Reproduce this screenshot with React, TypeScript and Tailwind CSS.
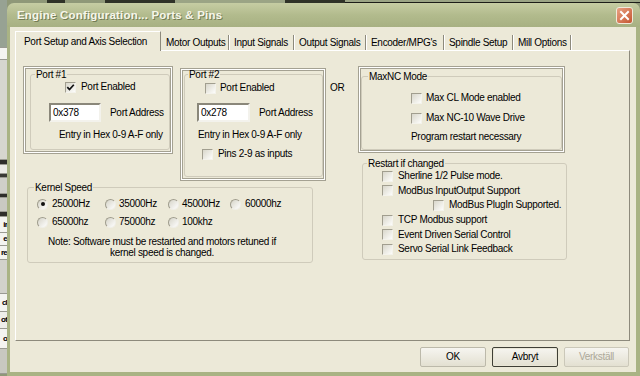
import React from "react";

function Check({ checked = false }: { checked?: boolean }) {
  return (
    <span className="flex h-[11px] w-[11px] shrink-0 items-center justify-center border border-t-[#a19e8f] border-l-[#a19e8f] border-r-[#f4f3ec] border-b-[#f4f3ec] bg-linear-to-br from-[#d9d7cb] to-[#fdfdfb]">
      {checked && (
        <svg width="9" height="9" viewBox="0 0 9 9">
          <path d="M1.3 4.2 L3.5 6.5 L7.8 1.8" fill="none" stroke="#111" strokeWidth="1.7" />
        </svg>
      )}
    </span>
  );
}

function Radio({ on = false }: { on?: boolean }) {
  return (
    <span className="flex h-[11px] w-[11px] shrink-0 items-center justify-center rounded-full border border-t-[#9f9c8d] border-l-[#9f9c8d] border-r-[#f0efe8] border-b-[#f0efe8] bg-linear-to-br from-[#d6d4c8] to-white">
      {on && <span className="h-[4px] w-[4px] rounded-full bg-[#111]" />}
    </span>
  );
}

function HexBox({ value, w }: { value: string; w: string }) {
  return (
    <div className={`flex h-[19px] items-center border-2 border-t-[#8a877a] border-l-[#8a877a] border-r-[#f3f2ec] border-b-[#f3f2ec] bg-white pl-[2px] ${w}`}>
      {value}
    </div>
  );
}

function Tab({ label, w }: { label: string; w: string }) {
  return (
    <div className={`flex h-[15px] items-center border-r border-[#8d8a7c] pl-[5px] shadow-[1px_0_0_#fff] ${w}`}>
      {label}
    </div>
  );
}

function Btn({ label, kind }: { label: string; kind?: "default" | "off" }) {
  const look =
    kind === "default"
      ? "border-[#3f3f36] shadow-[inset_0_0_0_1px_#e9e6d6]"
      : kind === "off"
      ? "border-[#cbc8b9] text-[#aca899]"
      : "border-[#bcb9aa]";
  return (
    <div className={`flex h-[20px] items-center justify-center rounded-[2px] border bg-linear-to-b from-[#f6f5f0] to-[#e3e0d1] ${look}`}>
      {label}
    </div>
  );
}

const sideBlocks: { h: string; bg: string; t?: string }[] = [
  { h: "h-[48px]", bg: "bg-[#97a293]" },
  { h: "h-[12px]", bg: "bg-[#f5f5f1]" },
  { h: "h-[100px]", bg: "bg-[#d6d6cf]" },
  { h: "h-[5px]", bg: "bg-[#2e2e2a]" },
  { h: "h-[9px]", bg: "bg-[#ececE6]" },
  { h: "h-[4px]", bg: "bg-[#3a3a35]" },
  { h: "h-[16px]", bg: "bg-[#cfcfc8]" },
  { h: "h-[4px]", bg: "bg-[#2e2e2a]" },
  { h: "h-[14px]", bg: "bg-[#c9c9c2]" },
  { h: "h-[5px]", bg: "bg-[#2e2e2a]" },
  { h: "h-[16px]", bg: "bg-[#f4f4f0]", t: "ir" },
  { h: "h-[13px]", bg: "bg-[#f4f4f0]", t: "e" },
  { h: "h-[14px]", bg: "bg-[#f4f4f0]", t: "re" },
  { h: "h-[34px]", bg: "bg-[#d2d2cb]" },
  { h: "h-[18px]", bg: "bg-[#f4f4f0]", t: "cl" },
  { h: "h-[17px]", bg: "bg-[#eeeee9]", t: "ot" },
  { h: "h-[20px]", bg: "bg-[#f4f4f0]", t: "o" },
  { h: "h-[25px]", bg: "bg-[#c8c8c0]" },
];

export default function App() {
  return (
    <div className="flex h-[376px] w-[640px] overflow-hidden bg-[#8f9878] text-[10px] leading-[12px] tracking-[-0.3px] text-black [font-family:'Liberation_Sans',Arial,sans-serif]">
      {/* window behind the dialog */}
      <div className="flex w-[7px] shrink-0 flex-col">
        {sideBlocks.map((b, i) => (
          <div key={i} className={`flex shrink-0 items-center justify-end border-b border-[#9a9a92] ${b.h} ${b.bg}`}>
            {b.t && <span className="text-[8px] font-bold leading-none tracking-[-0.8px] whitespace-nowrap">{b.t}</span>}
          </div>
        ))}
      </div>

      <div className="flex w-[633px] shrink-0 flex-col">
        <div className="flex h-[3px] shrink-0">
          <div className="w-[40px] bg-[#8f9878]" />
          <div className="w-[18px] bg-[#2f3227]" />
          <div className="w-[40px] bg-[#8f9878]" />
          <div className="w-[70px] bg-[#2f3227]" />
          <div className="w-[110px] bg-[#9ba485]" />
          <div className="w-[60px] bg-[#2f3227]" />
          <div className="flex-1 border-b border-[#1c1c18] bg-[#9ba485]" />
        </div>

        {/* title bar */}
        <div className="flex h-[24px] shrink-0 items-center justify-between rounded-t-[7px] bg-linear-to-b from-[#c6cda3] via-[#b2bb8d] to-[#a7b082] pl-[10px] pr-[7px]">
          <span className="text-[11.5px] font-bold tracking-[0.2px] text-[#f6f6ea] [text-shadow:1px_1px_0_#737d55]">
            Engine Configuration... Ports &amp; Pins
          </span>
          <div className="flex h-[17px] w-[17px] items-center justify-center rounded-[3px] border border-[#f1eadb] bg-linear-to-br from-[#e9a283] to-[#c4532f]">
            <svg width="11" height="11" viewBox="0 0 11 11">
              <path d="M2 2 L9 9 M9 2 L2 9" stroke="#fff" strokeWidth="2" strokeLinecap="square" />
            </svg>
          </div>
        </div>

        {/* dialog body */}
        <div className="flex flex-1 flex-col border-b-[4px] border-l-[3px] border-r-[4px] border-[#a9b384] bg-[#ece9d8] pt-[4px]">
          <div className="ml-[5px] flex h-[19px] items-end">
            <div className="relative z-10 -mb-[1px] flex h-[20px] w-[146px] items-center border border-b-0 border-t-white border-l-white border-r-[#8d8a7c] bg-[#ece9d8] pl-[8px]">
              Port Setup and Axis Selection
            </div>
            <Tab label="Motor Outputs" w="w-[68px]" />
            <Tab label="Input Signals" w="w-[65px]" />
            <Tab label="Output Signals" w="w-[72px]" />
            <Tab label="Encoder/MPG's" w="w-[78px]" />
            <Tab label="Spindle Setup" w="w-[69px]" />
            <Tab label="Mill Options" w="w-[58px]" />
          </div>

          <div className="ml-[5px] flex h-[291px] w-[615px] items-start border border-t-white border-l-white border-r-[#8d8a7c] border-b-[#8d8a7c] pl-[7px] pt-[15px]">
            {/* left column: ports + kernel */}
            <div className="flex w-[303px] flex-col">
              <div className="flex items-start gap-[7px]">
                <div className="h-[88px] w-[150px] border border-[#a4a192] pb-[3px] pl-[6px] pr-[2px] pt-[2px] shadow-[inset_0_0_0_1px_#fff,inset_0_0_0_2px_#a4a192]">
                  <fieldset className="h-full rounded-[3px] border border-[#cfcbbb]">
                    <legend className="ml-[4px] px-[1px] leading-[11px]">Port #1</legend>
                    <div className="ml-[34px] flex h-[14px] items-center gap-[5px]">
                      <Check checked />
                      <span>Port Enabled</span>
                    </div>
                    <div className="ml-[18px] mt-[9px] flex items-center">
                      <HexBox value="0x378" w="w-[52px]" />
                      <span className="ml-[9px]">Port Address</span>
                    </div>
                    <div className="ml-[28px] mt-[7px]">Entry in Hex 0-9 A-F only</div>
                  </fieldset>
                </div>

                <div className="mt-[2px] h-[113px] w-[146px] border border-[#a4a192] pb-[3px] pl-[3px] pr-[2px] shadow-[inset_0_0_0_1px_#fff,inset_0_0_0_2px_#a4a192]">
                  <fieldset className="h-full rounded-[3px] border border-[#cfcbbb]">
                    <legend className="ml-[3px] px-[1px] leading-[11px]">Port #2</legend>
                    <div className="ml-[20px] mt-[1px] flex h-[14px] items-center gap-[4px]">
                      <Check />
                      <span>Port Enabled</span>
                    </div>
                    <div className="ml-[12px] mt-[8px] flex items-center">
                      <HexBox value="0x278" w="w-[53px]" />
                      <span className="ml-[9px]">Port Address</span>
                    </div>
                    <div className="ml-[13px] mt-[7px]">Entry in Hex 0-9 A-F only</div>
                    <div className="ml-[17px] mt-[6px] flex h-[14px] items-center gap-[5px]">
                      <Check />
                      <span>Pins 2-9 as inputs</span>
                    </div>
                  </fieldset>
                </div>
              </div>

              <fieldset className="ml-[4px] mt-[1px] h-[81px] w-[286px] rounded-[3px] border border-[#cfcbbb]">
                <legend className="ml-[6px] px-[1px] leading-[11px]">Kernel Speed</legend>
                <div className="ml-[9px] mt-[4px] flex h-[14px] items-center">
                  <div className="flex w-[68px] items-center gap-[4px]"><Radio on /><span>25000Hz</span></div>
                  <div className="flex w-[63px] items-center gap-[3px]"><Radio /><span>35000Hz</span></div>
                  <div className="flex w-[62px] items-center gap-[3px]"><Radio /><span>45000Hz</span></div>
                  <div className="flex items-center gap-[4px]"><Radio /><span>60000hz</span></div>
                </div>
                <div className="ml-[9px] mt-[4px] flex h-[14px] items-center">
                  <div className="flex w-[68px] items-center gap-[4px]"><Radio /><span>65000hz</span></div>
                  <div className="flex w-[63px] items-center gap-[3px]"><Radio /><span>75000hz</span></div>
                  <div className="flex items-center gap-[3px]"><Radio /><span>100khz</span></div>
                </div>
                <div className="ml-[12px] mt-[7px] w-[244px] text-center leading-[11px]">
                  Note: Software must be restarted and motors retuned if
                  <br />
                  kernel speed is changed.
                </div>
              </fieldset>
            </div>

            <div className="ml-[4px] mt-[16px] w-[28px]">OR</div>

            {/* right column: MaxNC + restart options */}
            <div className="flex flex-col">
              <div className="h-[87px] w-[207px] border border-[#a4a192] pb-[2px] pl-[2px] pr-[2px] pt-[4px] shadow-[inset_0_0_0_1px_#fff,inset_0_0_0_2px_#a4a192]">
                <fieldset className="h-full rounded-[3px] border border-[#cfcbbb]">
                  <legend className="ml-[6px] px-[1px] leading-[11px]">MaxNC Mode</legend>
                  <div className="ml-[49px] mt-[9px] flex h-[14px] items-center gap-[4px]">
                    <Check />
                    <span>Max CL Mode enabled</span>
                  </div>
                  <div className="ml-[49px] mt-[6px] flex h-[14px] items-center gap-[4px]">
                    <Check />
                    <span>Max NC-10 Wave Drive</span>
                  </div>
                  <div className="ml-[49px] mt-[6px]">Program restart necessary</div>
                </fieldset>
              </div>

              <fieldset className="ml-[4px] mt-[5px] h-[102px] w-[205px] rounded-[3px] border border-[#cfcbbb]">
                <legend className="ml-[4px] px-[1px] leading-[11px]">Restart if changed</legend>
                <div className="flex flex-col">
                  <div className="ml-[19px] flex h-[14.6px] items-center gap-[5px]"><Check /><span>Sherline 1/2 Pulse mode.</span></div>
                  <div className="ml-[19px] flex h-[14.6px] items-center gap-[5px]"><Check /><span>ModBus InputOutput Support</span></div>
                  <div className="ml-[70px] flex h-[14.6px] items-center gap-[5px]"><Check /><span>ModBus PlugIn Supported.</span></div>
                  <div className="ml-[19px] flex h-[14.6px] items-center gap-[5px]"><Check /><span>TCP Modbus support</span></div>
                  <div className="ml-[19px] flex h-[14.6px] items-center gap-[5px]"><Check /><span>Event Driven Serial Control</span></div>
                  <div className="ml-[19px] flex h-[14.6px] items-center gap-[5px]"><Check /><span>Servo Serial Link Feedback</span></div>
                </div>
              </fieldset>
            </div>
          </div>

          <div className="mt-[6px] flex justify-end gap-[6px] pr-[7px]">
            <div className="w-[66px]"><Btn label="OK" /></div>
            <div className="w-[66px]"><Btn label="Avbryt" kind="default" /></div>
            <div className="w-[65px]"><Btn label="Verkställ" kind="off" /></div>
          </div>
        </div>
      </div>
    </div>
  );
}
